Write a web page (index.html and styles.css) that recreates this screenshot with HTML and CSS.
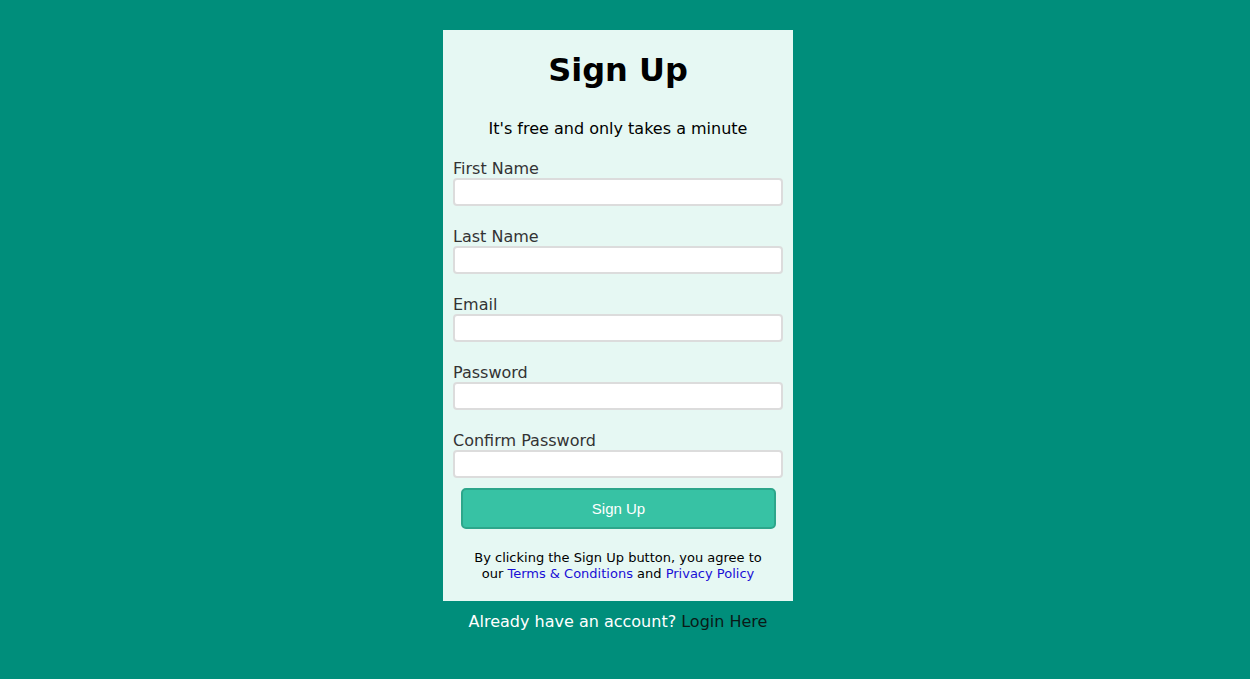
FILE: index.html
```html
<!DOCTYPE html>
<html lang="en">
<head>
<meta charset="utf-8">
<title>Sign Up</title>
<link rel="stylesheet" href="styles.css">
</head>
<body>
<main class="page">
  <form class="card">
    <h1 class="title">Sign Up</h1>
    <p class="subtitle">It's free and only takes a minute</p>
    <div class="field">
      <label class="label" for="fn">First Name</label>
      <input class="input" id="fn" type="text">
    </div>
    <div class="field">
      <label class="label" for="ln">Last Name</label>
      <input class="input" id="ln" type="text">
    </div>
    <div class="field">
      <label class="label" for="em">Email</label>
      <input class="input" id="em" type="email">
    </div>
    <div class="field">
      <label class="label" for="pw">Password</label>
      <input class="input" id="pw" type="password">
    </div>
    <div class="field field-last">
      <label class="label" for="cpw">Confirm Password</label>
      <input class="input" id="cpw" type="password">
    </div>
    <button class="btn" type="button">Sign Up</button>
    <p class="terms">By clicking the Sign Up button, you agree to our <a class="link" href="#">Terms &amp; Conditions</a> and <a class="link" href="#">Privacy Policy</a></p>
  </form>
  <p class="footer">Already have an account? <a class="login" href="#">Login Here</a></p>
</main>
</body>
</html>
```

FILE: styles.css
```css
html, body {
  margin: 0;
  padding: 0;
}
body {
  background: #008e7b;
  font-family: Verdana, "DejaVu Sans", sans-serif;
  min-height: 679px;
}
.page {
  display: flex;
  flex-direction: column;
  align-items: center;
  padding-top: 30px;
  padding-right: 14px;
}
.card {
  width: 330px;
  background: #e6f8f3;
  padding: 22px 10px 19px;
  display: flex;
  flex-direction: column;
}
.title {
  margin: 0 0 30px;
  text-align: center;
  font-size: 32px;
  line-height: 37px;
  font-weight: bold;
  color: #000;
}
.subtitle {
  margin: 0 0 21px;
  text-align: center;
  font-size: 16px;
  line-height: 19px;
  color: #000;
}
.field {
  display: flex;
  flex-direction: column;
  margin-bottom: 21px;
}
.field-last {
  margin-bottom: 10px;
}
.label {
  font-size: 16px;
  line-height: 19px;
  color: #333;
}
.input {
  box-sizing: border-box;
  height: 28px;
  width: 100%;
  margin: 0;
  border: 2px solid #dcdcdc;
  border-radius: 4px;
  background: #fff;
  outline: none;
}
.btn {
  box-sizing: border-box;
  margin: 0 7px 0 8px;
  height: 41px;
  background: #37c2a4;
  border: 2px solid #2da68b;
  border-radius: 5px;
  color: #fff;
  font-family: "Liberation Sans", Arial, sans-serif;
  font-size: 15px;
}
.terms {
  margin: 21px 0 0;
  padding: 0 14px;
  text-align: center;
  font-size: 13px;
  line-height: 16px;
  color: #000;
}
.link {
  color: #1a0fd6;
  text-decoration: none;
}
.footer {
  margin: 11px 0 0;
  font-size: 16px;
  line-height: 19px;
  color: #fff;
}
.login {
  color: #0a1a17;
  text-decoration: none;
}
```
